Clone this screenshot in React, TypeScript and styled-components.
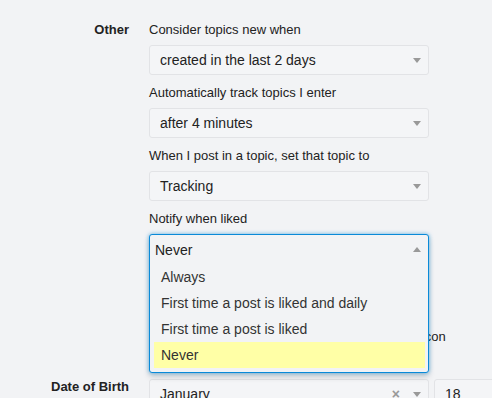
import React from 'react'
import styled, { createGlobalStyle } from 'styled-components'

const GlobalStyle = createGlobalStyle`
    html, body {
        margin: 0;
        overflow: hidden;
        background: #f2f3f5;
        font-family: "Liberation Sans", Arial, sans-serif;
        color: #222;
    }
`
const Page = styled.div`
    padding-top: 20px;
`
const Section = styled.div<{ $top?: number }>`
    display: grid;
    grid-template-columns: 129px 280px;
    column-gap: 20px;
    margin-top: ${props => props.$top || 0}px;
`
const SectionLabel = styled.div<{ $lh?: number }>`
    text-align: right;
    font-weight: bold;
    font-size: 13px;
    line-height: ${props => props.$lh || 20}px;
`
const Controls = styled.div`
    display: flex;
    flex-direction: column;
`
const Field = styled.div`
    margin-bottom: 8px;
`
const FieldLabel = styled.div`
    font-size: 13px;
    line-height: 20px;
    margin-bottom: 5px;
`
const Select = styled.div<{ $width?: number }>`
    box-sizing: border-box;
    width: ${props => props.$width || 280}px;
    flex-shrink: 0;
    height: 30px;
    display: flex;
    align-items: center;
    padding: 0 7px 0 10px;
    border: 1px solid #e2e3e6;
    border-radius: 3px;
    background: #f4f5f7;
    font-size: 14px;
`
const SelectText = styled.span`
    flex: 1;
    white-space: nowrap;
`
const Arrow = styled.span<{ $up?: boolean }>`
    width: 0;
    height: 0;
    border-left: 4px solid transparent;
    border-right: 4px solid transparent;
    ${props => props.$up
        ? 'border-bottom: 5px solid #999;'
        : 'border-top: 5px solid #999;'}
`
const Clear = styled.span`
    color: #999;
    font-weight: bold;
    font-size: 14px;
    margin-right: 13px;
`
const DropWrap = styled.div`
    position: relative;
    height: 30px;
`
const DropBox = styled.div`
    position: absolute;
    top: 0;
    left: 0;
    right: 0;
    z-index: 5;
    border: 1px solid #0a8ad8;
    border-radius: 3px;
    background: #f2f3f5;
    box-shadow: 0 0 4px rgba(10, 138, 216, 0.6), 0 4px 6px rgba(0, 0, 0, 0.15);
`
const DropHeader = styled.div`
    height: 29px;
    display: flex;
    align-items: center;
    padding: 0 7px 0 5px;
    font-size: 14px;
`
const OptionList = styled.div`
    padding: 0 3px 4px 4px;
`
const Option = styled.div<{ $active?: boolean }>`
    height: 26px;
    line-height: 26px;
    padding: 0 7px;
    font-size: 14px;
    color: #333;
    background: ${props => props.$active ? '#ffffa6' : 'transparent'};
`
const CheckGroup = styled.div`
    display: flex;
    flex-direction: column;
    gap: 6px;
    margin-top: 3px;
`
const CheckRow = styled.label`
    display: flex;
    align-items: center;
    font-size: 13px;
    line-height: 20px;
    white-space: nowrap;
`
const Box = styled.span`
    box-sizing: border-box;
    width: 13px;
    height: 13px;
    border: 1px solid #8f8f8f;
    border-radius: 2px;
    background: #fff;
    margin: 0 9px 0 6px;
`
const DateRow = styled.div`
    display: flex;
    gap: 5px;
`

const fields = [
    { label: 'Consider topics new when', value: 'created in the last 2 days' },
    { label: 'Automatically track topics I enter', value: 'after 4 minutes' },
    { label: 'When I post in a topic, set that topic to', value: 'Tracking' },
]

const likedOptions = ['Always', 'First time a post is liked and daily', 'First time a post is liked', 'Never']

const checks = [
    'Open all external links in a new tab',
    'Enable quote reply for highlighted text',
    'Show new / updated topic count on browser icon',
]

const App = () => {
    return (
        <Page>
            <GlobalStyle />
            <Section>
                <SectionLabel>Other</SectionLabel>
                <Controls>
                    {fields.map(f => (
                        <Field key={f.label}>
                            <FieldLabel>{f.label}</FieldLabel>
                            <Select>
                                <SelectText>{f.value}</SelectText>
                                <Arrow />
                            </Select>
                        </Field>
                    ))}
                    <Field>
                        <FieldLabel>Notify when liked</FieldLabel>
                        <DropWrap>
                            <DropBox>
                                <DropHeader>
                                    <SelectText>Never</SelectText>
                                    <Arrow $up />
                                </DropHeader>
                                <OptionList>
                                    {likedOptions.map(o => (
                                        <Option key={o} $active={o === 'Never'}>{o}</Option>
                                    ))}
                                </OptionList>
                            </DropBox>
                        </DropWrap>
                    </Field>
                    <CheckGroup>
                        {checks.map(c => (
                            <CheckRow key={c}><Box />{c}</CheckRow>
                        ))}
                    </CheckGroup>
                </Controls>
            </Section>
            <Section $top={32}>
                <SectionLabel $lh={16}>Date of Birth</SectionLabel>
                <DateRow>
                    <Select>
                        <SelectText>January</SelectText>
                        <Clear>×</Clear>
                        <Arrow />
                    </Select>
                    <Select $width={80}>
                        <SelectText>18</SelectText>
                        <Arrow />
                    </Select>
                </DateRow>
            </Section>
        </Page>
    )
}

export default App
